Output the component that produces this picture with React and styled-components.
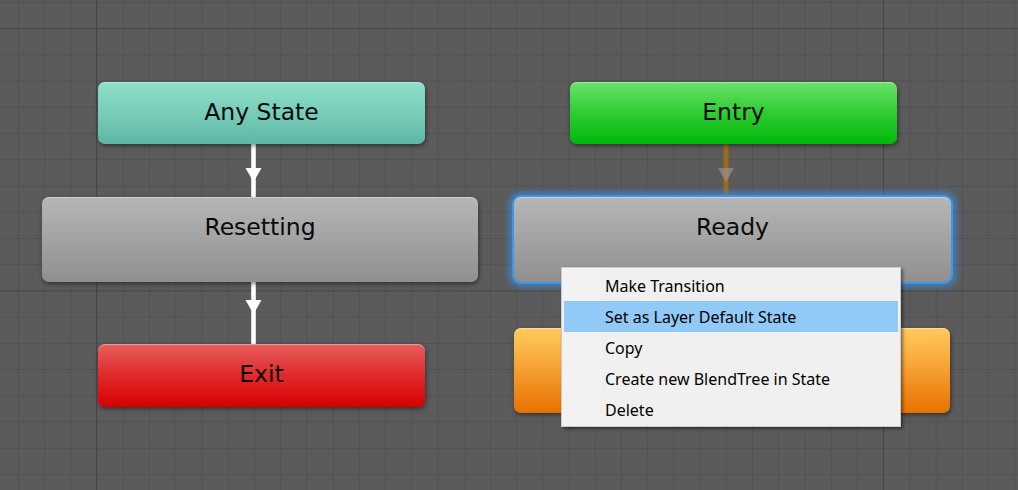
import React from "react"
import styled, { createGlobalStyle, css } from "styled-components"

const GlobalStyle = createGlobalStyle`
  html, body {
    margin: 0;
    padding: 0;
    background: #5b5b5b;
    overflow: hidden;
  }
`

const variants = {
  any: css`
    background: linear-gradient(to bottom, #8de0cb 0%, #78cdb9 50%, #5fb5a6 100%);
  `,
  entry: css`
    background: linear-gradient(to bottom, #6ae36b 0%, #2fcc32 50%, #00b80a 100%);
  `,
  exit: css`
    background: linear-gradient(to bottom, #e85e5e 0%, #e02a2a 50%, #d60000 100%);
  `,
  normal: css`
    background: linear-gradient(to bottom, #b6b6b6 0%, #a3a3a3 50%, #8f8f8f 100%);
  `,
  default: css`
    background: linear-gradient(to bottom, #ffcb5f 0%, #f59f30 50%, #e77100 100%);
  `,
}

const Canvas = styled.div`
  position: relative;
  width: 1018px;
  height: 490px;
  overflow: hidden;
  background-color: #5b5b5b;
  background-image:
    linear-gradient(to right, #464646 1px, transparent 1px),
    linear-gradient(to bottom, #464646 1px, transparent 1px),
    linear-gradient(to right, #525252 1px, transparent 1px),
    linear-gradient(to bottom, #525252 1px, transparent 1px);
  background-size: 787px 100%, 100% 262.3px, 26.23px 26.23px, 26.23px 26.23px;
  background-position: 96px 0, 0 28px, 18px 2px, 18px 2px;
`

const Edges = styled.svg`
  position: absolute;
  left: 0;
  top: 0;
  width: 1018px;
  height: 490px;
  pointer-events: none;
`

const StateNode = styled.div`
  position: absolute;
  left: ${p => p.$x}px;
  top: ${p => p.$y}px;
  width: ${p => p.$w}px;
  height: ${p => p.$h}px;
  box-sizing: border-box;
  padding-top: 16px;
  border-radius: 7px;
  text-align: center;
  font-family: "DejaVu Sans", Verdana, sans-serif;
  font-size: 23.5px;
  line-height: 28px;
  color: #0a0a0a;
  ${p => variants[p.$variant]}
  box-shadow: inset 0 1px 0 rgba(255, 255, 255, 0.35),
    1px 2px 4px rgba(0, 0, 0, 0.45);
  ${p =>
    p.$selected &&
    css`
      box-shadow: inset 0 1px 0 rgba(255, 255, 255, 0.35),
        0 0 0 2px #3f95e6, 0 0 6px 5px rgba(52, 142, 235, 0.7);
    `}
`

const Menu = styled.div`
  position: absolute;
  left: 561px;
  top: 267px;
  width: 340px;
  box-sizing: border-box;
  padding: 2px 2px 1px;
  border: 1px solid #cbcbcb;
  background: linear-gradient(to right, #f2f2f2 39px, #f0f0f0 39px);
  box-shadow: 2px 2px 3px rgba(0, 0, 0, 0.45);
  display: flex;
  flex-direction: column;
`

const MenuItem = styled.div`
  height: 31px;
  display: flex;
  align-items: center;
  padding-left: 41px;
  font-family: "Noto Sans", "Open Sans", sans-serif;
  font-size: 16px;
  color: #000;
  background: ${p => (p.$active ? "#91c9f7" : "transparent")};
  white-space: nowrap;
`

const menuItems = [
  "Make Transition",
  "Set as Layer Default State",
  "Copy",
  "Create new BlendTree in State",
  "Delete",
]

const WhiteArrow = ({ x, y1, y2, ay }) => (
  <g>
    <line x1={x} y1={y1} x2={x} y2={y2} stroke="#dcdcdc" strokeWidth="5" />
    <line x1={x} y1={y1} x2={x} y2={y2} stroke="#ffffff" strokeWidth="3" />
    <polygon points={`${x - 8},${ay} ${x + 8},${ay} ${x},${ay + 14}`} fill="#ffffff" />
  </g>
)

export default function App() {
  return (
    <>
      <GlobalStyle />
      <Canvas>
        <Edges viewBox="0 0 1018 490">
          <WhiteArrow x={253.5} y1={143} y2={198} ay={168} />
          <WhiteArrow x={253.5} y1={281} y2={345} ay={300} />
          <line x1={726} y1={143} x2={726} y2={198} stroke="#9c6a1c" strokeWidth="5" />
          <polygon points="718,168 734,168 726,182" fill="rgba(150,150,150,0.65)" />
        </Edges>

        <StateNode $variant="any" $x={98} $y={82} $w={327} $h={62}>Any State</StateNode>
        <StateNode $variant="entry" $x={570} $y={82} $w={327} $h={62}>Entry</StateNode>
        <StateNode $variant="normal" $x={42} $y={197} $w={436} $h={85}>Resetting</StateNode>
        <StateNode $variant="normal" $selected $x={514} $y={197} $w={437} $h={85}>Ready</StateNode>
        <StateNode $variant="exit" $x={98} $y={344} $w={327} $h={63}>Exit</StateNode>
        <StateNode $variant="default" $x={514} $y={328} $w={436} $h={85} />

        <Menu>
          {menuItems.map((item, i) => (
            <MenuItem key={item} $active={i === 1}>
              {item}
            </MenuItem>
          ))}
        </Menu>
      </Canvas>
    </>
  )
}
